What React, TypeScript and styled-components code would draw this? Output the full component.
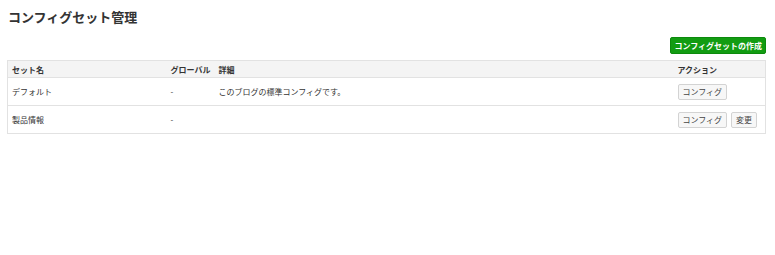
import styled, { createGlobalStyle } from "styled-components";

type ConfigSet = {
  name: string;
  global: string;
  detail: string;
  editable: boolean;
};

const sets: ConfigSet[] = [
  { name: "デフォルト", global: "-", detail: "このブログの標準コンフィグです。", editable: false },
  { name: "製品情報", global: "-", detail: "", editable: true },
];

function App() {
  return (
    <>
      <GlobalStyle />
      <Page>
        <Title>コンフィグセット管理</Title>
        <Toolbar>
          <PrimaryButton type="button">コンフィグセットの作成</PrimaryButton>
        </Toolbar>
        <Table>
          <colgroup>
            <col style={{ width: 159 }} />
            <col style={{ width: 48 }} />
            <col />
            <col style={{ width: 92 }} />
          </colgroup>
          <thead>
            <tr>
              <HeadCell>セット名</HeadCell>
              <HeadCell>グローバル</HeadCell>
              <HeadCell>詳細</HeadCell>
              <HeadCell>アクション</HeadCell>
            </tr>
          </thead>
          <tbody>
            {sets.map((s) => (
              <Row key={s.name}>
                <Cell>{s.name}</Cell>
                <Cell>{s.global}</Cell>
                <Cell>{s.detail}</Cell>
                <Cell>
                  <Actions>
                    <SmallButton type="button">コンフィグ</SmallButton>
                    {s.editable && <SmallButton type="button">変更</SmallButton>}
                  </Actions>
                </Cell>
              </Row>
            ))}
          </tbody>
        </Table>
      </Page>
    </>
  );
}

// STYLING
const GlobalStyle = createGlobalStyle`
    body {
      margin: 0;
      background: #fff;
      color: #333;
      font-family: "Noto Sans CJK JP", "Noto Sans", sans-serif;
    }
`;

const Page = styled.div`
    padding: 7px 9px 7px 7px;
`;

const Title = styled.h1`
    margin: 0 0 0 1px;
    font-size: 13px;
    line-height: 20px;
    font-weight: 700;
    color: #333;
`;

const Toolbar = styled.div`
    display: flex;
    justify-content: flex-end;
    margin-top: 10px;
    margin-bottom: 6px;
`;

const PrimaryButton = styled.button`
    height: 17px;
    padding: 0 3px;
    border: 1px solid #0c8a0c;
    border-radius: 2px;
    background: #129c12;
    color: #fff;
    font-family: inherit;
    font-size: 8px;
    font-weight: 700;
    line-height: 15px;
    cursor: pointer;
`;

const Table = styled.table`
    width: 100%;
    table-layout: fixed;
    border-collapse: collapse;
    border: 1px solid #e2e2e2;
    font-size: 8px;
`;

const HeadCell = styled.th`
    height: 16px;
    padding: 0 4px;
    background: #f4f4f4;
    border-bottom: 1px solid #e2e2e2;
    text-align: left;
    font-weight: 700;
    color: #333;
`;

const Row = styled.tr`
    border-bottom: 1px solid #e2e2e2;
`;

const Cell = styled.td`
    height: 27px;
    padding: 0 4px;
    vertical-align: middle;
    color: #333;
`;

const Actions = styled.div`
    display: flex;
    gap: 4px;
`;

const SmallButton = styled.button`
    height: 16px;
    padding: 0 4px;
    border: 1px solid #d3d3d3;
    border-radius: 2px;
    background: #f7f7f7;
    color: #444;
    font-family: inherit;
    font-size: 8px;
    line-height: 14px;
    cursor: pointer;
`;

export default App;
